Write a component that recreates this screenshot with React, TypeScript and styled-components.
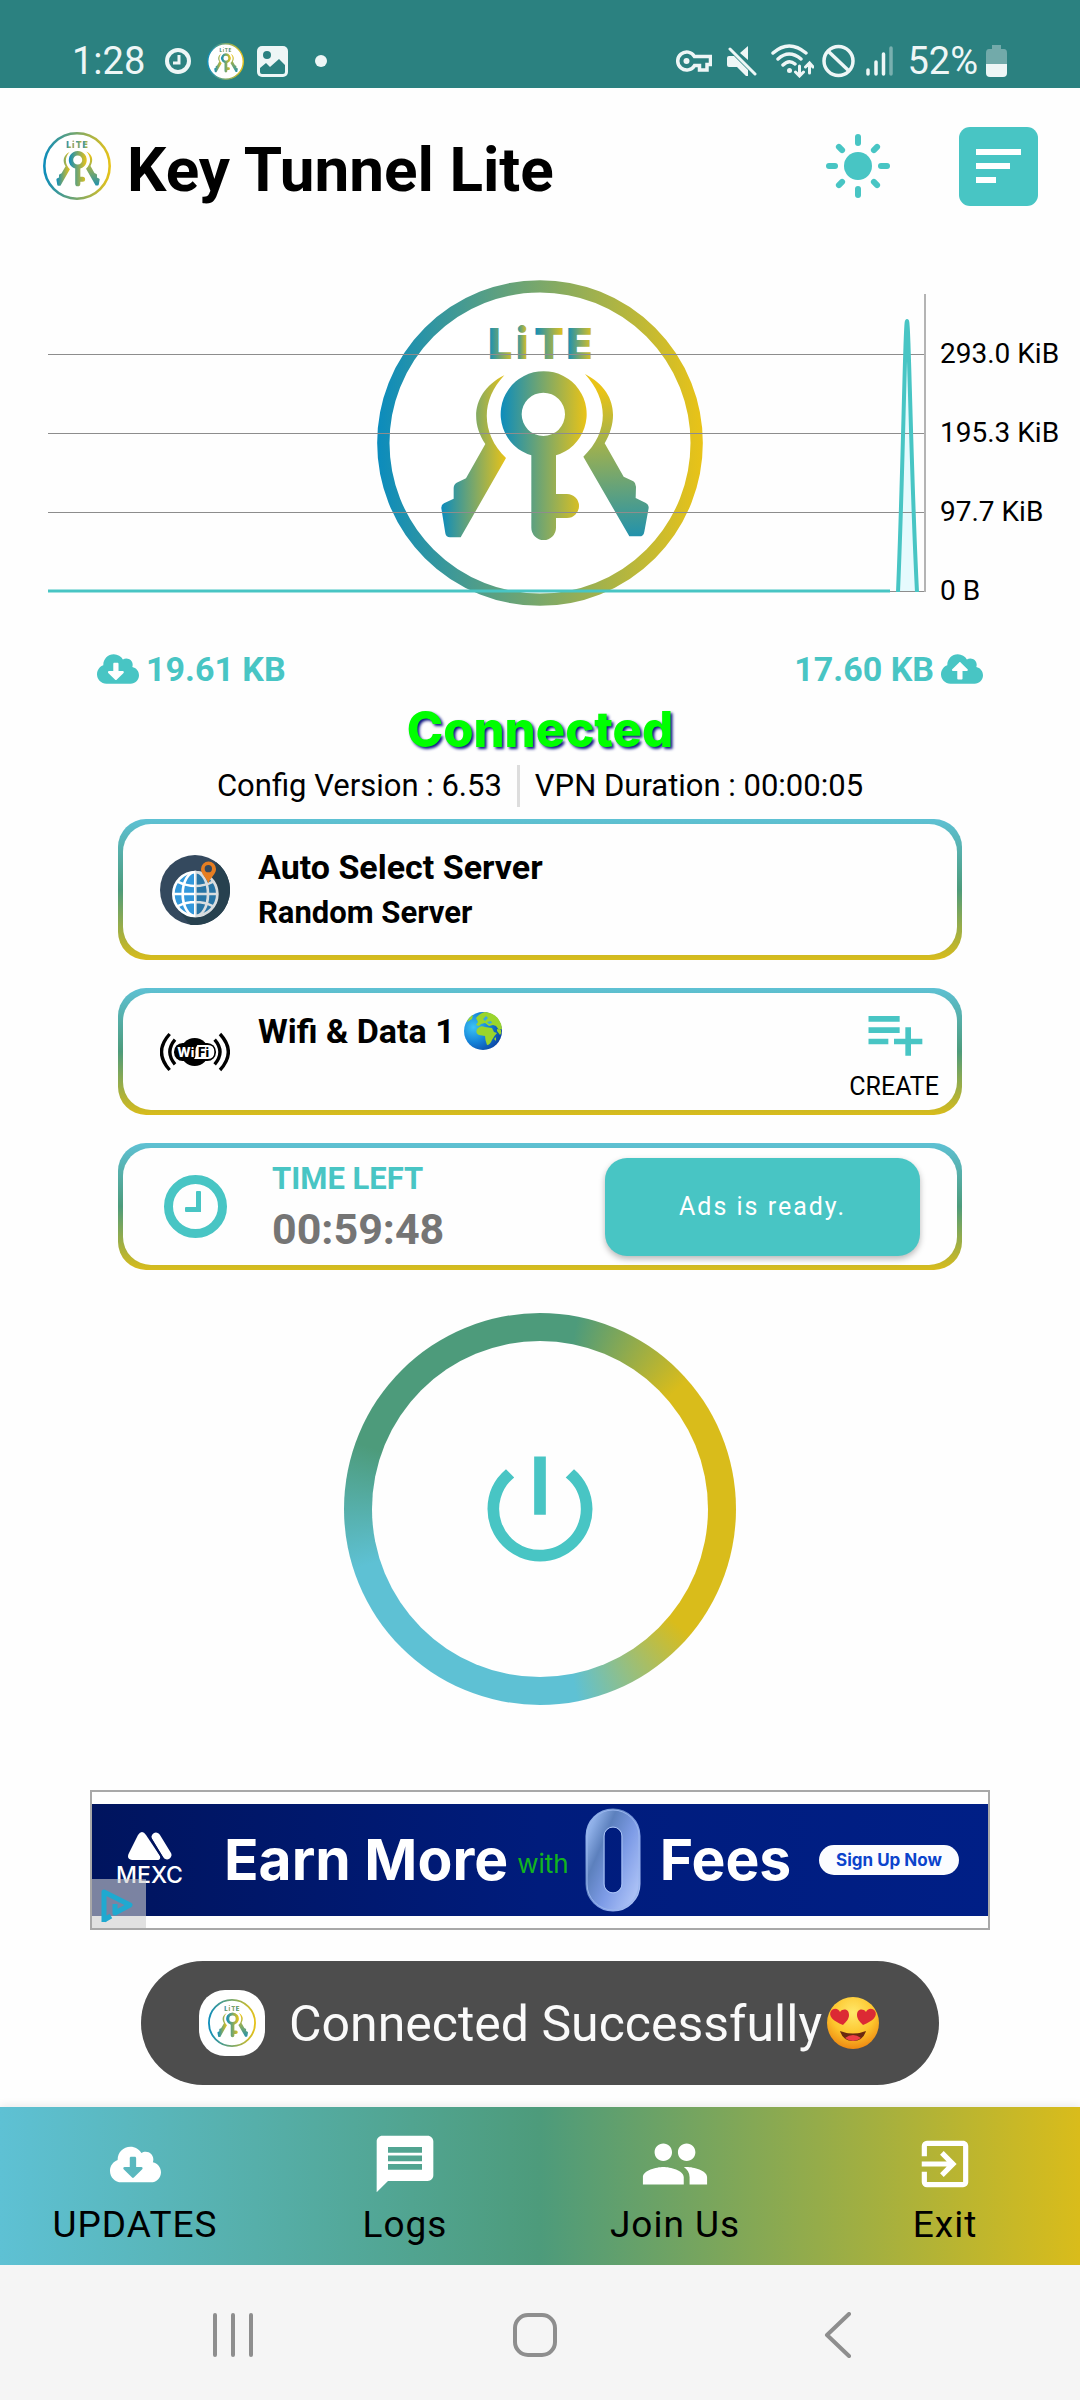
import React, { useId } from "react";
import styled, { createGlobalStyle } from "styled-components";
import { FaCloudDownloadAlt, FaCloudUploadAlt } from "react-icons/fa";
import {
  MdExitToApp,
  MdGroup,
  MdMessage,
  MdPlaylistAdd,
  MdPowerSettingsNew,
} from "react-icons/md";

const teal = "#48c5c4";
const sky = "#5ec1d4";
const green = "#4d9b7b";
const gold = "#d9bc1b";
const light = "#eef6f6";

const GlobalStyle = createGlobalStyle`
  *, *::before, *::after { box-sizing: border-box; }
  body {
    margin: 0;
    background: #fefefe;
    color: #000;
    font-family: Roboto, "Liberation Sans", sans-serif;
  }
  button { font: inherit; border: 0; padding: 0; background: none; color: inherit; cursor: pointer; }
  svg { display: block; flex: none; }
`;

const Screen = styled.div`
  display: flex;
  flex-direction: column;
  min-height: 100vh;
`;

/* ---------- status bar ---------- */

const StatusBar = styled.div`
  display: flex;
  justify-content: space-between;
  height: 88px;
  padding: 34px 73px 0 72px;
  background: #2b8180;
  color: ${light};
  font-size: 38px;
`;

const StatusGroup = styled.div<{ $gap: number }>`
  display: flex;
  align-items: center;
  gap: ${(p) => p.$gap}px;
`;

/* ---------- header ---------- */

const Header = styled.header`
  display: flex;
  align-items: center;
  height: 156px;
  padding: 0 42px 0 43px;
`;

const Title = styled.h1`
  flex: 1;
  margin: 0 0 0 16px;
  padding-top: 7px;
  font-size: 62px;
  line-height: 72px;
  font-weight: 700;
`;

const ThemeButton = styled.button`
  margin-right: 69px;
`;

const MenuButton = styled.button`
  display: grid;
  place-items: center;
  width: 79px;
  height: 79px;
  border-radius: 11px;
  background: ${teal};
`;

/* ---------- traffic chart ---------- */

const ChartArea = styled.section`
  display: grid;
  margin-top: 36px;
  > * { grid-area: 1 / 1; }
`;

const ChartLogo = styled.div`
  justify-self: center;
`;

const ChartLayer = styled.div`
  display: grid;
  grid-template-columns: 1fr 140px;
  column-gap: 14px;
  padding: 14px 0 0 48px;
`;

const Axis = styled.ol`
  margin: 0;
  padding: 20px 0 0;
  list-style: none;
  font-size: 28px;
  line-height: 79px;
  white-space: nowrap;
`;

const TrafficRow = styled.div`
  display: flex;
  justify-content: space-between;
  margin-top: 18px;
  padding: 0 97px;
`;

const Traffic = styled.div`
  display: flex;
  align-items: center;
  gap: 7px;
  color: ${teal};
  font-size: 34px;
  line-height: 40px;
  font-weight: 700;
`;

/* ---------- connection state ---------- */

const State = styled.h2`
  margin: 12px 0 0;
  text-align: center;
  font-family: Inter, Roboto, sans-serif;
  font-size: 49px;
  line-height: 56px;
  font-weight: 800;
  color: #00ff00;
  text-shadow: 2px 2px 3px #0c1480;
`;

const InfoRow = styled.div`
  display: flex;
  justify-content: center;
  align-items: center;
  margin-top: 7px;
  font-size: 31px;
  line-height: 42px;
`;

const Divider = styled.span`
  width: 3px;
  height: 42px;
  margin: 0 15px;
  background: #dddddd;
`;

/* ---------- cards ---------- */

const CardList = styled.section`
  display: flex;
  flex-direction: column;
  gap: 28px;
  margin-top: 12px;
  padding: 0 118px;
`;

const CardFrame = styled.article`
  padding: 5px;
  border-radius: 28px;
  background: linear-gradient(${sky}, ${green} 50%, ${gold});
`;

const CardBody = styled.div<{ $tall?: boolean }>`
  display: flex;
  align-items: center;
  height: ${(p) => (p.$tall ? 131 : 117)}px;
  padding: 0 18px 0 37px;
  border-radius: 28px;
  background: #fefefe;
`;

const CardIcon = styled.div`
  display: grid;
  place-items: center;
  width: 70px;
`;

const CardText = styled.div<{ $top?: boolean; $gap?: number }>`
  flex: 1;
  align-self: ${(p) => (p.$top ? "flex-start" : "center")};
  padding-top: ${(p) => (p.$top ? 16 : 0)}px;
  margin-left: ${(p) => p.$gap ?? 28}px;
`;

const CardTitle = styled.h3`
  display: flex;
  align-items: center;
  gap: 8px;
  margin: 0;
  font-size: 34px;
  line-height: 44px;
  font-weight: 700;
`;

const CardSub = styled.p`
  margin: 0;
  padding-top: 2px;
  font-size: 31px;
  line-height: 44px;
  font-weight: 700;
`;

const CreateButton = styled.button`
  display: flex;
  flex-direction: column;
  align-items: center;
  gap: 4px;
  padding-bottom: 2px;
  font-size: 25px;
  line-height: 32px;
  svg { color: ${teal}; }
`;

const TimeLabel = styled.div`
  color: ${teal};
  font-size: 31px;
  line-height: 44px;
  font-weight: 700;
`;

const TimeValue = styled.div`
  color: #757575;
  font-size: 43px;
  line-height: 56px;
  font-weight: 700;
`;

const AdButton = styled.button`
  width: 315px;
  height: 98px;
  margin-right: 19px;
  border-radius: 22px;
  background: ${teal};
  color: #fff;
  font-size: 25px;
  letter-spacing: 2px;
  box-shadow: 0 3px 6px rgba(0, 0, 0, 0.28);
`;

/* ---------- power ---------- */

const PowerButton = styled.button`
  display: grid;
  align-self: center;
  width: 392px;
  height: 392px;
  margin-top: 43px;
  padding: 28px;
  border-radius: 50%;
  background: conic-gradient(
    ${green} 11deg,
    ${gold} 49deg 130deg,
    ${sky} 169deg 252deg,
    ${green} 290deg
  );
`;

const PowerFace = styled.span`
  display: grid;
  place-items: center;
  border-radius: 50%;
  background: #fefefe;
  color: ${teal};
`;

/* ---------- advert ---------- */

const Ad = styled.aside`
  position: relative;
  margin: 85px 90px 0;
  padding: 12px 0;
  border: 2px solid #a8a8a8;
`;

const AdBanner = styled.div`
  display: flex;
  align-items: center;
  height: 112px;
  padding: 0 29px 0 23px;
  background: linear-gradient(90deg, #00145e, #001c7c 50%, #001f86);
  color: #fff;
  font-family: Inter, Roboto, sans-serif;
  white-space: nowrap;
`;

const Brand = styled.div`
  display: flex;
  flex-direction: column;
  align-items: center;
  gap: 2px;
  width: 69px;
  font-size: 23px;
  line-height: 26px;
  font-weight: 500;
`;

const AdHeadline = styled.strong`
  font-size: 57px;
  line-height: 66px;
  font-weight: 700;
`;

const AdCopy = styled.div`
  display: flex;
  flex: 1;
  align-items: center;
  margin: 0 24px 0 40px;
`;

const AdWith = styled.span`
  margin: 6px 16px 0 9px;
  color: #12b41e;
  font-size: 26px;
`;

const Zero = styled.span`
  margin-right: 19px;
`;

const SignUp = styled.a`
  width: 140px;
  border-radius: 15px;
  background: #fbfcff;
  color: #0b43cc;
  font-size: 17px;
  line-height: 30px;
  font-weight: 700;
  text-align: center;
  text-decoration: none;
`;

const AdMark = styled.span`
  position: absolute;
  left: 0;
  bottom: 0;
  padding: 8px 11px 5px 9px;
  background: rgba(205, 205, 205, 0.6);
`;

/* ---------- toast ---------- */

const Toast = styled.div`
  display: flex;
  align-self: center;
  align-items: center;
  height: 124px;
  margin-top: 31px;
  padding: 0 58px;
  border-radius: 62px;
  background: #4d4d4d;
  color: #fafafa;
  font-size: 50px;
  white-space: nowrap;
`;

const ToastIcon = styled.span`
  display: grid;
  place-items: center;
  width: 66px;
  height: 66px;
  margin-right: 24px;
  border-radius: 26px;
  background: #fff;
`;

const ToastText = styled.span`
  padding: 2px 3px 0 0;
`;

/* ---------- bottom bars ---------- */

const TabBar = styled.nav`
  display: grid;
  grid-template-columns: repeat(4, 1fr);
  height: 158px;
  margin-top: 22px;
  background: linear-gradient(90deg, ${sky}, ${green} 50%, ${gold});
  box-shadow: 0 -2px 8px rgba(0, 0, 0, 0.08);
`;

const Tab = styled.button`
  display: flex;
  flex-direction: column;
  align-items: center;
  padding-top: 22px;
  font-size: 37px;
  line-height: 44px;
  letter-spacing: 1px;
`;

const TabIcon = styled.span`
  display: grid;
  place-items: center;
  height: 70px;
  margin-bottom: 4px;
  color: #fff;
`;

const SystemBar = styled.nav`
  display: flex;
  justify-content: space-between;
  align-items: center;
  height: 135px;
  padding: 4px 220px 0 210px;
  background: #f5f5f5;
`;

/* ---------- drawings ---------- */

function Logo({ size }: { size: number }) {
  const id = useId();
  const blue = "#0b8cbd";
  const yellow = "#e9c317";
  const grad = (name: string, x1: number, x2: number) => (
    <linearGradient id={id + name} gradientUnits="userSpaceOnUse" x1={x1} x2={x2} y1="0" y2="0">
      <stop offset="0" stopColor={blue} />
      <stop offset="1" stopColor={yellow} />
    </linearGradient>
  );
  const letters: [string, number, number][] = [
    ["L", 384, 465],
    ["i", 467, 502],
    ["T", 523, 611],
    ["E", 619, 700],
  ];
  return (
    <svg width={size} height={size} viewBox="51 60 978 978" role="img" aria-label="Key Tunnel Lite logo">
      <defs>
        {grad("ring", 52, 1028)}
        {grad("mid", 421, 679)}
        {grad("left", 243, 438)}
        {letters.map(([ch, a, b]) => (
          <React.Fragment key={ch}>{grad(ch, a, b)}</React.Fragment>
        ))}
        <linearGradient id={id + "right"} gradientUnits="userSpaceOnUse" x1="740" y1="390" x2="760" y2="860">
          <stop offset="0" stopColor={yellow} />
          <stop offset="1" stopColor="#168fb5" />
        </linearGradient>
      </defs>
      <circle cx="540" cy="549" r="470" fill="#fff" stroke={`url(#${id}ring)`} strokeWidth="37" />
      <g fontFamily="Inter, sans-serif" fontWeight="900" fontSize="129">
        {letters.map(([ch, a]) => (
          <text key={ch} x={a} y="296" fill={`url(#${id}${ch})`}>
            {ch}
          </text>
        ))}
      </g>
      <path
        fill={`url(#${id}mid)`}
        fillRule="evenodd"
        d="M514 586A129 129 0 1 1 588 586V702H621A36 36 0 0 1 621 774H588V803A37 37 0 0 1 514 803ZM550 398A65 65 0 1 0 550 528A65 65 0 1 0 550 398Z"
      />
      <path
        fill={`url(#${id}left)`}
        d="M433 346C340 392 328 482 376 552L318 655L290 668Q281 673 281 684V716L252 730Q243 735 244 745L256 820Q258 832 270 832H302L438 594C362 520 362 420 433 346Z"
      />
      <path
        fill={`url(#${id}right)`}
        d="M675 342C764 388 780 470 734 550L791 650L820 664Q828 669 828 680L827 714L856 728Q867 734 866 744L853 815Q851 829 838 829H808L670 590C748 515 746 420 675 342Z"
      />
    </svg>
  );
}

const StatusClock = () => (
  <svg width="36" height="38" viewBox="0 0 36 38" fill="none" stroke={light} strokeWidth="4" aria-hidden="true">
    <circle cx="20" cy="19" r="11" />
    <path d="M21 13v8h-6" strokeWidth="3" />
  </svg>
);

const StatusPicture = () => (
  <svg width="31" height="31" viewBox="0 0 31 31" aria-hidden="true">
    <rect width="31" height="31" rx="5" fill={light} />
    <circle cx="10" cy="9" r="4" fill="#2b8180" />
    <path d="M3 22L9 17L13 21L22 13L28 19V26Q28 28 26 28H5Q3 28 3 26Z" fill="#2b8180" />
  </svg>
);

const StatusDot = () => (
  <svg width="26" height="12" viewBox="0 0 26 12" aria-hidden="true">
    <circle cx="20" cy="6" r="6" fill={light} />
  </svg>
);

const VpnKey = () => (
  <svg width="36" height="22" viewBox="0 0 36 22" fill="none" stroke={light} strokeWidth="3.5" aria-hidden="true">
    <path d="M18.500 6.500A9 9 0 1 0 18.500 15.500H23.500V20H31V14.500H34.500V6.500Z" />
    <circle cx="10.500" cy="11" r="3" fill={light} stroke="none" />
  </svg>
);

const Muted = () => (
  <svg width="43" height="30" viewBox="0 0 43 30" aria-hidden="true">
    <path d="M7 12Q7 10 9 10H14L28 24V30H26L17 21H9Q7 21 7 19ZM20 7L28 0V14Z" fill={light} />
    <path d="M10 3L35 28" stroke={light} strokeWidth="3" strokeLinecap="round" />
  </svg>
);

const WifiStatus = () => (
  <svg width="43" height="34" viewBox="0 0 43 34" fill="none" stroke={light} strokeWidth="3.500" strokeLinecap="round" aria-hidden="true">
    <path d="M2 9Q18 -5 35 9M7 15Q18 5 30 15M12 21Q18 15 24 20" />
    <circle cx="18.500" cy="26.500" r="2.500" fill={light} stroke="none" />
    <path d="M28.500 22V31M24.500 28L28.500 32L32.500 28M38.500 29V20M34.500 23L38.500 19L42 23" strokeWidth="3" />
  </svg>
);

const Blocked = () => (
  <svg width="33" height="34" viewBox="0 0 33 34" fill="none" stroke={light} strokeWidth="3.500" aria-hidden="true">
    <circle cx="16.500" cy="17" r="14.500" />
    <path d="M6 7L27 27" />
  </svg>
);

const Signal = () => (
  <svg width="36" height="30" viewBox="0 0 36 30" stroke={light} strokeWidth="3.500" strokeLinecap="round" aria-hidden="true">
    <path d="M5 24V28M13 16V28M20.500 8V28" />
    <path d="M28 2V28" opacity="0.4" />
  </svg>
);

const Battery = () => (
  <svg width="21" height="32" viewBox="0 0 21 32" aria-hidden="true">
    <path d="M6 0H15V4H18Q21 4 21 8V19H0V8Q0 4 3 4H6Z" fill="#72aaaa" />
    <path d="M0 19H21V28Q21 32 17 32H4Q0 32 0 28Z" fill={light} />
  </svg>
);

const Sun = () => (
  <svg width="64" height="64" viewBox="-32 -32 64 64" aria-hidden="true">
    <circle r="14" fill={teal} />
    {[0, 45, 90, 135, 180, 225, 270, 315].map((a) => (
      <path
        key={a}
        d={a % 90 ? "M0 -22.500V-27" : "M0 -23V-29"}
        stroke={teal}
        strokeWidth="6"
        strokeLinecap="round"
        transform={`rotate(${a})`}
      />
    ))}
  </svg>
);

const MenuLines = () => (
  <svg width="45" height="35" viewBox="0 0 45 35" fill="#fff" aria-hidden="true">
    <path d="M0 0H45V6H0ZM0 14H34V20H0ZM0 28H20V34H0Z" />
  </svg>
);

const TrafficPlot = () => (
  <svg width="100%" height="300" viewBox="0 0 878 300" preserveAspectRatio="none" fill="none" role="img" aria-label="Traffic graph">
    <path d="M850 298C855 180 857 26 859 26C861 26 863 180 869 298Z" fill="#e6fafd" />
    <path d="M0 60.500H877M0 139.500H877M0 218.500H877M0 297.500H877" stroke="#8d8d8d" />
    <path d="M877 0V298" stroke="#b4b4b4" strokeWidth="2" />
    <path d="M0 297H842" stroke={teal} strokeWidth="3" />
    <path d="M850 298C855 180 857 27 859 27C861 27 863 180 869 298" stroke={teal} strokeWidth="4" />
  </svg>
);

const ServerGlobe = () => (
  <svg width="70" height="70" viewBox="240 672 210 210" fill="none" aria-hidden="true">
    <circle cx="345" cy="777" r="105" fill="#34495e" />
    <path d="M408 693A105 105 0 0 1 330 881L296 839L395 740Z" fill="#27414f" />
    <circle cx="346" cy="789" r="67" fill="#3498db" />
    <path d="M346 722A67 67 0 0 1 346 856Z" fill="#2980b9" />
    <g stroke="#fff" strokeWidth="8">
      <circle cx="346" cy="789" r="66" />
      <ellipse cx="346" cy="789" rx="38" ry="66" />
      <path d="M346 722V856M279 789H413M292 752Q346 778 400 752M292 826Q346 800 400 826" />
    </g>
    <path d="M346 719A70 70 0 0 1 346 859Z" fill="#27414f" opacity="0.18" />
    <path d="M385 757C378 738 363 730 363 714A22 22 0 1 1 408 714C408 730 392 738 385 757Z" fill="#e67e22" />
    <circle cx="385" cy="713" r="11" fill="#34495e" />
  </svg>
);

const WifiBadge = () => (
  <svg width="70" height="40" viewBox="180 183 210 120" fill="none" role="img" aria-label="WiFi">
    <circle cx="284" cy="243" r="42" fill="#000" />
    <rect x="222" y="216" width="126" height="54" rx="26" fill="#000" />
    <path d="M292 222H324Q343 222 343 243Q343 264 324 264H282Q288 258 286 244Q285 230 292 222Z" fill="#fff" />
    <g fontFamily="Inter, sans-serif" fontWeight="800" fontSize="38">
      <text x="232" y="257" fill="#fff">Wi</text>
      <text x="294" y="257" fill="#000">Fi</text>
    </g>
    <g stroke="#000" strokeWidth="10">
      <path d="M209 189Q160 243 209 297M360 189Q410 243 360 297" />
      <path d="M225 206Q194 243 225 280M344 206Q376 243 344 280" />
    </g>
  </svg>
);

const EarthEmoji = () => {
  const id = useId();
  return (
    <svg width="40" height="40" viewBox="0 0 40 40" role="img" aria-label="Globe showing Europe and Africa">
      <defs>
        <radialGradient id={id} cx="0.25" cy="0.4" r="0.8">
          <stop offset="0" stopColor="#3cc4f5" />
          <stop offset="0.5" stopColor="#1482d8" />
          <stop offset="1" stopColor="#0a3f9e" />
        </radialGradient>
      </defs>
      <circle cx="20" cy="20" r="19" fill={`url(#${id})`} />
      <path
        d="M13 7Q17 2 22 1Q32 2 36 9Q39 13 39 18L36 19L33 15L30 14L26 15L22 12L18 13L16 15L13 14L15 11Z"
        fill="#9ad52c"
      />
      <path
        d="M14 18Q17 14 22 16L29 17L31 21L34 22Q31 25 29 29Q27 34 24 34Q22 29 22 25L16 24Q12 22 14 18Z"
        fill="#9ad52c"
      />
      <path d="M34 18L38 19Q39 22 37 24L34 20Z" fill="#9ad52c" />
      <path d="M4 11Q6 6 10 4L9 8ZM31 28L33 26L33 30Z" fill="#9ad52c" />
      <path d="M20 8L23 5L25 7L22 10ZM24 11L28 10L29 12L26 13Z" fill="#3aa7e0" />
    </svg>
  );
};

const HeartEyes = () => {
  const id = useId();
  return (
    <svg width="56" height="56" viewBox="0 0 56 56" role="img" aria-label="Smiling face with heart eyes">
      <defs>
        <radialGradient id={id} cx="0.5" cy="0.3" r="0.7">
          <stop offset="0" stopColor="#ffe86a" />
          <stop offset="0.6" stopColor="#fdc52c" />
          <stop offset="1" stopColor="#ee8912" />
        </radialGradient>
      </defs>
      <circle cx="28" cy="28" r="26" fill={`url(#${id})`} />
      <path d="M18 30C8 26 3 21 6 16C9 12 14 14 15 17C18 13 24 14 24 20C24 24 21 27 18 30Z" fill="#dc2a34" />
      <path d="M38 30C48 26 53 21 50 16C47 12 42 14 41 17C38 13 32 14 32 20C32 24 35 27 38 30Z" fill="#dc2a34" />
      <path d="M15 36Q28 41 41 36Q38 46 28 46Q18 46 15 36Z" fill="#6a2a10" />
      <path d="M20 43Q28 37 36 43Q32 46 28 46Q24 46 20 43Z" fill="#ee3f45" />
    </svg>
  );
};

const TimeClock = () => (
  <svg width="63" height="63" viewBox="0 0 63 63" aria-hidden="true">
    <circle cx="31.500" cy="31.500" r="27" fill="none" stroke={teal} strokeWidth="9" />
    <path d="M32 17Q32 16 33 16H36Q37 16 37 17V37H22Q21 37 21 36V33Q21 32 22 32H32Z" fill={teal} />
  </svg>
);

const MexcMark = () => (
  <svg width="44" height="28" viewBox="0 0 44 28" fill="#fff" aria-hidden="true">
    <path d="M10 3Q14 -3 18 3L32 24Q33 28 29 28H4Q-2 27 1 21Z" />
    <path d="M28 5L39 23" stroke="#fff" strokeWidth="9" strokeLinecap="round" />
    <path d="M20 2L35 27" stroke="#00145e" strokeWidth="2" />
  </svg>
);

const ZeroFigure = () => {
  const id = useId();
  return (
    <svg width="56" height="104" viewBox="0 0 56 104" fill="none" role="img" aria-label="0">
      <defs>
        <linearGradient id={id} x1="0" y1="0" x2="1" y2="1">
          <stop offset="0" stopColor="#8fb0e8" />
          <stop offset="0.25" stopColor="#5c80bd" />
          <stop offset="0.6" stopColor="#7d9be6" />
          <stop offset="1" stopColor="#a9bff5" />
        </linearGradient>
      </defs>
      <rect x="10" y="10" width="36" height="84" rx="18" stroke={`url(#${id})`} strokeWidth="19" />
      <rect x="2" y="2" width="52" height="100" rx="26" stroke="#9ab6ee" strokeWidth="1" />
      <rect x="19" y="19" width="18" height="66" rx="9" stroke="#a9c2f4" strokeWidth="1" />
    </svg>
  );
};

const AdChoices = () => (
  <svg width="34" height="36" viewBox="0 0 34 36" fill="none" stroke="#1fa9d0" strokeWidth="5" strokeLinejoin="round" aria-hidden="true">
    <path d="M3 35V5L29 18L14 26V17M3 33L10 29" />
  </svg>
);

const tabs = [
  { label: "UPDATES", icon: <FaCloudDownloadAlt size={51} /> },
  { label: "Logs", icon: <MdMessage size={68} /> },
  { label: "Join Us", icon: <MdGroup size={70} /> },
  { label: "Exit", icon: <MdExitToApp size={62} /> },
];

export default function App() {
  return (
    <Screen>
      <GlobalStyle />
      <StatusBar>
        <StatusGroup $gap={13}>
          <span>1:28</span>
          <StatusClock />
          <Logo size={37} />
          <StatusPicture />
          <StatusDot />
        </StatusGroup>
        <StatusGroup $gap={8}>
          <VpnKey />
          <Muted />
          <WifiStatus />
          <Blocked />
          <Signal />
          <span>52%</span>
          <Battery />
        </StatusGroup>
      </StatusBar>

      <Header>
        <Logo size={68} />
        <Title>Key Tunnel Lite</Title>
        <ThemeButton aria-label="Light theme">
          <Sun />
        </ThemeButton>
        <MenuButton aria-label="Menu">
          <MenuLines />
        </MenuButton>
      </Header>

      <ChartArea>
        <ChartLogo>
          <Logo size={326} />
        </ChartLogo>
        <ChartLayer>
          <TrafficPlot />
          <Axis>
            <li>293.0 KiB</li>
            <li>195.3 KiB</li>
            <li>97.7 KiB</li>
            <li>0 B</li>
          </Axis>
        </ChartLayer>
      </ChartArea>

      <TrafficRow>
        <Traffic>
          <FaCloudDownloadAlt size={42} aria-label="Downloaded" />
          <span>19.61 KB</span>
        </Traffic>
        <Traffic>
          <span>17.60 KB</span>
          <FaCloudUploadAlt size={42} aria-label="Uploaded" />
        </Traffic>
      </TrafficRow>

      <State>Connected</State>
      <InfoRow>
        <span>Config Version : 6.53</span>
        <Divider />
        <span>VPN Duration : 00:00:05</span>
      </InfoRow>

      <CardList>
        <CardFrame>
          <CardBody $tall>
            <CardIcon>
              <ServerGlobe />
            </CardIcon>
            <CardText>
              <CardTitle>Auto Select Server</CardTitle>
              <CardSub>Random Server</CardSub>
            </CardText>
          </CardBody>
        </CardFrame>
        <CardFrame>
          <CardBody>
            <CardIcon>
              <WifiBadge />
            </CardIcon>
            <CardText $top>
              <CardTitle>
                <span>Wifi &amp; Data 1</span>
                <EarthEmoji />
              </CardTitle>
            </CardText>
            <CreateButton>
              <MdPlaylistAdd size={68} />
              CREATE
            </CreateButton>
          </CardBody>
        </CardFrame>
        <CardFrame>
          <CardBody>
            <CardIcon>
              <TimeClock />
            </CardIcon>
            <CardText $gap={42}>
              <TimeLabel>TIME LEFT</TimeLabel>
              <TimeValue>00:59:48</TimeValue>
            </CardText>
            <AdButton>Ads is ready.</AdButton>
          </CardBody>
        </CardFrame>
      </CardList>

      <PowerButton aria-label="Disconnect">
        <PowerFace>
          <MdPowerSettingsNew size={140} />
        </PowerFace>
      </PowerButton>

      <Ad>
        <AdBanner>
          <Brand>
            <MexcMark />
            MEXC
          </Brand>
          <AdCopy>
            <AdHeadline>Earn More</AdHeadline>
            <AdWith>with</AdWith>
            <Zero>
              <ZeroFigure />
            </Zero>
            <AdHeadline>Fees</AdHeadline>
          </AdCopy>
          <SignUp href="#sign-up">Sign Up Now</SignUp>
        </AdBanner>
        <AdMark>
          <AdChoices />
        </AdMark>
      </Ad>

      <Toast role="status">
        <ToastIcon>
          <Logo size={48} />
        </ToastIcon>
        <ToastText>Connected Successfully</ToastText>
        <HeartEyes />
      </Toast>

      <TabBar>
        {tabs.map((t) => (
          <Tab key={t.label}>
            <TabIcon>{t.icon}</TabIcon>
            {t.label}
          </Tab>
        ))}
      </TabBar>

      <SystemBar>
        <button aria-label="Recent apps">
          <svg width="46" height="46" viewBox="0 0 46 46" stroke="#8e8e8e" strokeWidth="4" strokeLinecap="round">
            <path d="M5 3V43M23 3V43M41 3V43" />
          </svg>
        </button>
        <button aria-label="Home">
          <svg width="46" height="46" viewBox="0 0 46 46" fill="none" stroke="#8e8e8e" strokeWidth="4">
            <rect x="3" y="3" width="40" height="40" rx="13" />
          </svg>
        </button>
        <button aria-label="Back">
          <svg width="46" height="46" viewBox="0 0 46 46" fill="none" stroke="#8e8e8e" strokeWidth="4" strokeLinecap="round" strokeLinejoin="round">
            <path d="M35 2L13 23L35 44" />
          </svg>
        </button>
      </SystemBar>
    </Screen>
  );
}
